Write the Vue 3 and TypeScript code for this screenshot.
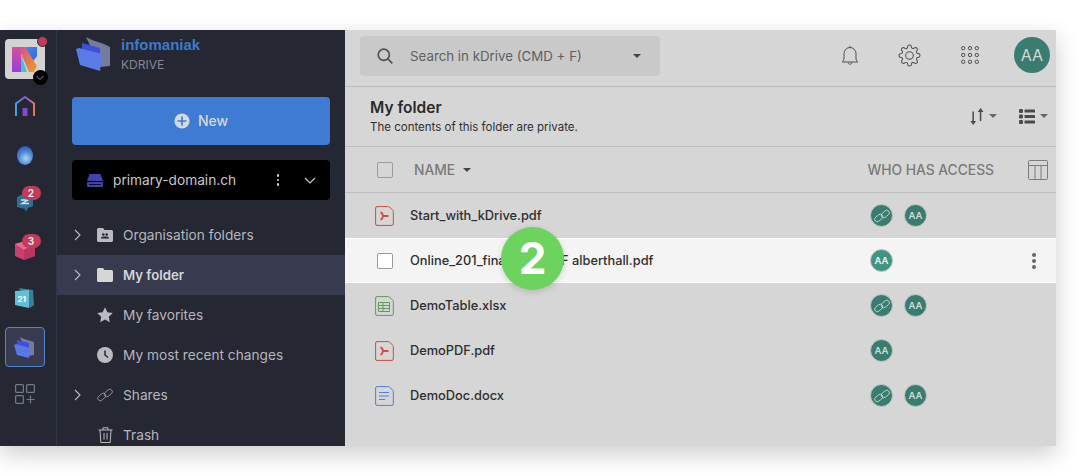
<script setup lang="ts">
type Access = 'link' | 'user'
interface FileRow { name: string; kind: 'pdf' | 'xlsx' | 'docx'; access: Access[]; active?: boolean }
const files: FileRow[] = [
  { name: 'Start_with_kDrive.pdf', kind: 'pdf', access: ['link', 'user'] },
  { name: 'Online_201_final_v2.1_PDF alberthall.pdf', kind: 'pdf', access: ['user'], active: true },
  { name: 'DemoTable.xlsx', kind: 'xlsx', access: ['link', 'user'] },
  { name: 'DemoPDF.pdf', kind: 'pdf', access: ['user'] },
  { name: 'DemoDoc.docx', kind: 'docx', access: ['link', 'user'] }
]
const nav = [
  { label: 'Organisation folders', icon: 'org', arrow: true },
  { label: 'My folder', icon: 'folder', arrow: true, selected: true },
  { label: 'My favorites', icon: 'star' },
  { label: 'My most recent changes', icon: 'clock' },
  { label: 'Shares', icon: 'link', arrow: true },
  { label: 'Trash', icon: 'trash' }
]
const filePath = 'M2 .6h11.500c.4 0 .7.1 1 .4l3.400 3.400c.3.3.4.6.4 1V18a1.400 1.400 0 0 1-1.400 1.400H2A1.400 1.400 0 0 1 .6 18V2A1.400 1.400 0 0 1 2 .6z'
</script>

<template>
  <div class="page">
    <div class="window">
      <aside class="rail">
        <div class="rail-logo">
          <div class="logo-box">
            <svg width="25" height="25" viewBox="0 0 25 25">
              <defs>
                <linearGradient id="kl" x1="0" y1="0" x2="0" y2="1"><stop offset="0" stop-color="#d84f9c"/><stop offset="1" stop-color="#9340d8"/></linearGradient>
                <linearGradient id="kd" x1="0" y1="0" x2="1" y2="1"><stop offset="0" stop-color="#d9489a"/><stop offset=".6" stop-color="#e57f45"/><stop offset="1" stop-color="#e8a03a"/></linearGradient>
                <linearGradient id="kr" x1="0" y1="0" x2="1" y2="1"><stop offset="0" stop-color="#3f8cf0"/><stop offset="1" stop-color="#3a5fe0"/></linearGradient>
              </defs>
              <path d="M0 0h9v25H0z" fill="url(#kl)"/>
              <path d="M9 8l6 17H9z" fill="#38c6dc"/>
              <path d="M13 0h12v9l-6 8z" fill="url(#kr)"/>
              <path d="M6 0h7l12 19-3 6h-5z" fill="url(#kd)"/>
            </svg>
          </div>
          <span class="logo-dot"></span>
          <span class="logo-chev">
            <svg width="10" height="6" viewBox="0 0 10 6"><path d="M1.500 1l3.500 3.500L8.500 1" fill="none" stroke="#8a8d96" stroke-width="1"/></svg>
          </span>
        </div>

        <div class="rail-item home">
          <svg width="20" height="20" viewBox="0 0 20 20">
            <defs><linearGradient id="hm" x1="0" y1="0" x2="1" y2="0"><stop offset="0" stop-color="#4a9ddc"/><stop offset=".5" stop-color="#8a55d0"/><stop offset="1" stop-color="#e0785a"/></linearGradient></defs>
            <path d="M1 20V7.500L10 1l9 6.500V20" fill="none" stroke="url(#hm)" stroke-width="2"/>
            <rect x="7.500" y="12" width="5" height="8" fill="#7f49cf"/>
          </svg>
        </div>
        <div class="rail-item drop">
          <span class="blob"></span>
        </div>
        <div class="rail-item chat">
          <svg width="16" height="19" viewBox="0 0 16 19">
            <path d="M0 4l8-4 8 3v10l-5 2-2 4-1-3-8-2z" fill="#2f6f93"/>
            <path d="M4 7h7L5 10.500h7" fill="none" stroke="#cfe6ee" stroke-width="1.400"/>
          </svg>
          <span class="count count-chat">2</span>
        </div>
        <div class="rail-item mail">
          <svg width="20" height="20" viewBox="0 0 20 20">
            <path d="M0 4l14-4 6 4v12l-11 4-9-4z" fill="#c9406f"/>
            <path d="M0 4l9 6 11-6-6-4z" fill="#e36a93"/>
            <path d="M9 10v10l11-4V4z" fill="#b8365f"/>
          </svg>
          <span class="count count-mail">3</span>
        </div>
        <div class="rail-item cal">
          <svg width="19" height="20" viewBox="0 0 19 20">
            <path d="M4 0l14 2 1 15-4 3z" fill="#3c7f93"/>
            <path d="M0 3l14-1v18L0 17z" fill="#63bfd6"/>
            <text x="2.500" y="14" class="cal-text">21</text>
          </svg>
        </div>
        <div class="rail-item drive">
          <svg width="21" height="21" viewBox="0 0 21 21">
            <path d="M6 0l4 2 10 3v13l-6 1z" fill="#747b9c"/>
            <path d="M3 3l12 3v13L3 14z" fill="#3d4fe0"/>
            <path d="M0 8l2-1 14 4-1 10-12-3z" fill="#5a77e8"/>
          </svg>
        </div>
        <div class="rail-item grid-add">
          <svg width="20" height="20" viewBox="0 0 20 20" fill="none" stroke="#73798a" stroke-width="1.200">
            <rect x=".6" y=".6" width="7.800" height="7.800" rx="1"/>
            <rect x="11.600" y=".6" width="7.800" height="7.800" rx="1"/>
            <rect x=".6" y="11.600" width="7.800" height="7.800" rx="1"/>
            <path d="M15.500 11.500v8M11.500 15.500h8"/>
          </svg>
        </div>
      </aside>

      <nav class="side">
        <div class="brand">
          <svg width="34" height="34" viewBox="0 0 34 34">
            <path d="M10 0l6 3 12 4 6 3v19l-10 1z" fill="#747b9c"/>
            <path d="M6 6l18 5v19L6 24z" fill="#3d4fe0"/>
            <path d="M0 12l3-1 23 6-2 17-20-6z" fill="#5a7be6"/>
          </svg>
          <div class="brand-text">
            <div class="brand-name">infomaniak</div>
            <div class="brand-sub">KDRIVE</div>
          </div>
        </div>

        <button class="new-btn">
          <svg width="16" height="16" viewBox="0 0 16 16"><circle cx="8" cy="8" r="7.600" fill="#d5d8de"/><path d="M8 3.500v9M3.500 8h9" stroke="#407bd3" stroke-width="1.700"/></svg>
          <span class="new-label">New</span>
        </button>

        <div class="drive-select">
          <svg width="16" height="13" viewBox="0 0 16 13">
            <path d="M2.500 0h11L16 7H0z" fill="#3f45a8"/>
            <rect y="8" width="16" height="5" rx="1" fill="#3f45a8"/>
            <rect x="2" y="10" width="12" height="1" fill="#111"/>
          </svg>
          <span class="drive-name">primary-domain.ch</span>
          <span class="vdots"><i></i><i></i><i></i></span>
          <svg class="drive-chev" width="12" height="7" viewBox="0 0 12 7"><path d="M1 1l5 5 5-5" fill="none" stroke="#c8c8c8" stroke-width="1.200"/></svg>
        </div>

        <ul class="nav">
          <li v-for="n in nav" :key="n.label" class="nav-row" :class="{ selected: n.selected }">
            <span class="nav-arrow">
              <svg v-if="n.arrow" width="7" height="12" viewBox="0 0 7 12"><path d="M1 1l5 5-5 5" fill="none" stroke="#b9bbc2" stroke-width="1.100"/></svg>
            </span>
            <span class="nav-icon">
              <svg v-if="n.icon === 'org'" width="16" height="14" viewBox="0 0 16 14">
                <path d="M0 1.500C0 .7.7 0 1.500 0H6l1.500 2h7c.8 0 1.500.7 1.500 1.500v9c0 .8-.7 1.500-1.500 1.500h-13C.7 14 0 13.300 0 12.500z" fill="#b9bbc0"/>
                <circle cx="6.300" cy="6.500" r="1.300" fill="#252733"/><circle cx="9.700" cy="6.500" r="1.300" fill="#252733"/>
                <path d="M4 10.500c0-1.300 1-2 2.300-2h3.400c1.300 0 2.300.7 2.300 2z" fill="#252733"/>
              </svg>
              <svg v-else-if="n.icon === 'folder'" width="16" height="14" viewBox="0 0 16 14">
                <path d="M0 1.500C0 .7.7 0 1.500 0H6l1.500 2h7c.8 0 1.500.7 1.500 1.500v9c0 .8-.7 1.500-1.500 1.500h-13C.7 14 0 13.300 0 12.500z" fill="#d6d6d6"/>
              </svg>
              <svg v-else-if="n.icon === 'star'" width="16" height="16" viewBox="0 0 16 16">
                <path d="M8 .3l2.400 5 5.400.7-4 3.800 1 5.400L8 12.600l-4.800 2.600 1-5.400-4-3.800 5.400-.7z" fill="#b9bbc0"/>
              </svg>
              <svg v-else-if="n.icon === 'clock'" width="16" height="16" viewBox="0 0 16 16">
                <circle cx="8" cy="8" r="8" fill="#b9bbc0"/><path d="M8 3.500V8l3 2.500" fill="none" stroke="#252733" stroke-width="1.500"/>
              </svg>
              <svg v-else-if="n.icon === 'link'" width="16" height="14" viewBox="0 0 16 14" fill="none" stroke="#9c9ea6" stroke-width=".8">
                <rect x=".2" y="6.500" width="9" height="5" rx="2.500" transform="rotate(-40 4.700 9)"/>
                <rect x="6.800" y="2.500" width="9" height="5" rx="2.500" transform="rotate(-40 11.300 5)"/>
              </svg>
              <svg v-else width="15" height="16" viewBox="0 0 15 16" fill="none" stroke="#b9bbc0" stroke-width="1">
                <path d="M.5 3h14M5 3V.8h5V3M2 3l.8 12.500h9.400L13 3M6 6v6.500M9 6v6.500"/>
              </svg>
            </span>
            <span class="nav-label">{{ n.label }}</span>
          </li>
        </ul>
      </nav>

      <main class="main">
        <header class="topbar">
          <div class="search">
            <svg width="16" height="16" viewBox="0 0 16 16" fill="none" stroke="#505050" stroke-width="1.700"><circle cx="6.800" cy="6.800" r="5.600"/><path d="M11 11l4.300 4.300"/></svg>
            <span class="search-text">Search in kDrive (CMD + F)</span>
            <span class="caret search-caret"></span>
          </div>
          <div class="top-icons">
            <svg class="ti-bell" width="18" height="21" viewBox="0 0 18 21" fill="none" stroke="#4f4f4f" stroke-width="1">
              <path d="M1.200 17h15.600c-1.200-1-1.800-2.400-1.800-4V8.500a6 6 0 0 0-12 0V13c0 1.600-.6 3-1.800 4zM9 2.500V.8M7 17.500c.4 2.300 3.600 2.300 4 0"/>
            </svg>
            <svg class="ti-gear" width="23" height="23" viewBox="0 0 24 24" fill="none" stroke="#4f4f4f" stroke-width="1.050">
              <circle cx="12" cy="12" r="4"/>
              <path d="M19.400 15a1.650 1.650 0 0 0 .33 1.820l.06.06a2 2 0 0 1 0 2.830 2 2 0 0 1-2.830 0l-.06-.06a1.650 1.650 0 0 0-1.820-.33 1.650 1.650 0 0 0-1 1.510V21a2 2 0 0 1-2 2 2 2 0 0 1-2-2v-.09A1.650 1.650 0 0 0 9 19.400a1.650 1.650 0 0 0-1.820.33l-.06.06a2 2 0 0 1-2.830 0 2 2 0 0 1 0-2.830l.06-.06a1.650 1.650 0 0 0 .33-1.820 1.650 1.650 0 0 0-1.510-1H3a2 2 0 0 1-2-2 2 2 0 0 1 2-2h.09A1.650 1.650 0 0 0 4.600 9a1.650 1.650 0 0 0-.33-1.820l-.06-.06a2 2 0 0 1 0-2.830 2 2 0 0 1 2.830 0l.06.06a1.650 1.650 0 0 0 1.820.33H9a1.650 1.650 0 0 0 1-1.510V3a2 2 0 0 1 2-2 2 2 0 0 1 2 2v.09a1.650 1.650 0 0 0 1 1.510 1.650 1.650 0 0 0 1.820-.33l.06-.06a2 2 0 0 1 2.830 0 2 2 0 0 1 0 2.830l-.06.06a1.650 1.650 0 0 0-.33 1.820V9a1.650 1.650 0 0 0 1.510 1H21a2 2 0 0 1 2 2 2 2 0 0 1-2 2h-.09a1.650 1.650 0 0 0-1.510 1z"/>
            </svg>
            <svg class="ti-grid" width="18" height="18" viewBox="0 0 18 18" fill="none" stroke="#4f4f4f" stroke-width="1">
              <template v-for="x in [2.200, 9, 15.800]" :key="x">
                <circle v-for="y in [2.200, 9, 15.800]" :key="y" :cx="x" :cy="y" r="1.700"/>
              </template>
            </svg>
            <span class="avatar-lg">AA</span>
          </div>
        </header>

        <section class="title-bar">
          <div>
            <h1>My folder</h1>
            <p>The contents of this folder are private.</p>
          </div>
          <div class="title-tools">
            <svg width="14" height="17" viewBox="0 0 14 17" fill="#4a4a4a"><path d="M2.400 3.500h1.500V13h2.200L3.200 17 .3 13h2.100zM9.800 4H7.700L10.600 0l2.900 4h-2.200v9H9.800z"/></svg>
            <span class="caret small"></span>
            <svg class="list-ico" width="16" height="15" viewBox="0 0 16 15" fill="#4a4a4a"><rect width="4" height="4" rx="1"/><rect y="5.500" width="4" height="4" rx="1"/><rect y="11" width="4" height="4" rx="1"/><rect x="5.500" y=".5" width="10.500" height="3" rx=".6"/><rect x="5.500" y="6" width="10.500" height="3" rx=".6"/><rect x="5.500" y="11.500" width="10.500" height="3" rx=".6"/></svg>
            <span class="caret small"></span>
          </div>
        </section>

        <div class="thead">
          <span class="check"></span>
          <span class="th-name">NAME</span>
          <span class="caret dark"></span>
          <span class="th-access">WHO HAS ACCESS</span>
          <svg class="th-cols" width="20" height="20" viewBox="0 0 20 20" fill="none" stroke="#7c7c7c" stroke-width="1"><rect x=".5" y=".5" width="19" height="19" rx="1"/><path d="M.5 5.500h19M7 5.500v14M13 5.500v14"/></svg>
        </div>

        <div v-for="f in files" :key="f.name" class="row" :class="{ active: f.active }">
          <span v-if="f.active" class="check row-check"></span>
          <span v-else class="file-ico">
            <svg width="19" height="20" viewBox="0 0 19 20" fill="none">
              <template v-if="f.kind === 'pdf'">
                <path :d="filePath" stroke="#c9503c"/>
                <path d="M5.500 6.500c1 0 2 1.200 2.500 3.500-.5 2.300-1.500 3.500-2.500 3.500M8 10h5.500" stroke="#c9503c" stroke-width="1.800"/>
              </template>
              <template v-else-if="f.kind === 'xlsx'">
                <path :d="filePath" stroke="#5a9e55"/>
                <path d="M3.500 6.500h11v9h-11zM3.500 9.500h11M3.500 12.500h11M8 6.500v9" stroke="#5a9e55"/>
              </template>
              <template v-else>
                <path :d="filePath" stroke="#4f83d1"/>
                <path d="M4 6.500h10M4 10h10M4 13.500h6" stroke="#4f83d1" stroke-width="1.200"/>
              </template>
            </svg>
          </span>
          <span class="file-name">{{ f.name }}</span>
          <span class="access">
            <span v-for="(a, i) in f.access" :key="i" class="chip">
              <svg v-if="a === 'link'" width="16" height="14" viewBox="0 0 16 14" fill="none" stroke="#d0dcd8" stroke-width=".8">
                <rect x=".2" y="6.500" width="9" height="5" rx="2.500" transform="rotate(-40 4.700 9)"/>
                <rect x="6.800" y="2.500" width="9" height="5" rx="2.500" transform="rotate(-40 11.300 5)"/>
              </svg>
              <template v-else>AA</template>
            </span>
          </span>
          <span v-if="f.active" class="row-dots"><i></i><i></i><i></i></span>
        </div>

        <span class="step">2</span>
      </main>
    </div>
  </div>
</template>

<style>
html, body { margin: 0; background: #fff; }
</style>

<style scoped>
.page {
  width: 1086px;
  height: 476px;
  padding-top: 30px;
  box-sizing: border-box;
  overflow: hidden;
  background: #fff;
  font-family: Inter, "Liberation Sans", sans-serif;
}
.window {
  width: 1056px;
  height: 416px;
  display: flex;
  overflow: hidden;
  box-shadow: 0 8px 22px rgba(0, 0, 0, 0.2);
}
.rail {
  width: 57px;
  flex: none;
  box-sizing: border-box;
  background: #252733;
  border-right: 1px solid #33364a;
  display: flex;
  flex-direction: column;
  align-items: center;
  padding-left: 5px;
  padding-right: 12px;
  padding-top: 9px;
}
.rail-logo {
  position: relative;
  width: 40px;
  height: 40px;
  flex: none;
  margin-bottom: 3px;
}
.logo-box {
  width: 40px;
  height: 40px;
  border-radius: 4px;
  background: #d3d3d3;
  display: flex;
  align-items: center;
  justify-content: center;
}
.logo-dot {
  position: absolute;
  top: -3px;
  right: -3px;
  width: 9px;
  height: 9px;
  border-radius: 50%;
  background: #c23a5c;
  border: 1px solid #252733;
}
.logo-chev {
  position: absolute;
  right: -3px;
  bottom: -6px;
  width: 15px;
  height: 15px;
  border-radius: 50%;
  background: #000;
  display: flex;
  align-items: center;
  justify-content: center;
}
.rail-item {
  position: relative;
  width: 40px;
  flex: none;
  display: flex;
  align-items: center;
  justify-content: center;
}
.rail-item.home { height: 48px; }
.rail-item.drop { height: 50px; }
.rail-item.chat { height: 44px; }
.rail-item.mail { height: 52px; }
.rail-item.cal { height: 44px; margin-bottom: 7px; }
.rail-item.drive {
  height: 40px;
  box-sizing: border-box;
  border: 1px solid #4d87cf;
  border-radius: 4px;
  background: #383b4f;
}
.rail-item.grid-add { height: 54px; }
.blob {
  width: 16px;
  height: 19px;
  border-radius: 50%;
  background: radial-gradient(circle at 55% 65%, #a9d8ee 0%, #4f86d6 45%, #1f3ea8 100%);
}
.count {
  position: absolute;
  height: 14px;
  min-width: 19px;
  border-radius: 7px;
  background: #c23a5c;
  color: #e8e8e8;
  font-size: 10px;
  font-weight: 700;
  line-height: 14px;
  text-align: center;
}
.count-chat { top: 6px; right: 4px; }
.count-mail { top: 10px; right: 4px; }
.cal-text { font-size: 8px; font-weight: 700; fill: #fff; font-family: Inter, sans-serif; }

.side {
  width: 288px;
  flex: none;
  background: #252733;
  display: flex;
  flex-direction: column;
  overflow: hidden;
}
.brand {
  height: 67px;
  flex: none;
  display: flex;
  align-items: flex-start;
  gap: 11px;
  padding: 7px 0 0 19px;
  box-sizing: border-box;
}
.brand-name {
  font-family: "Liberation Sans", sans-serif;
  font-size: 15px;
  font-weight: 700;
  color: #3f78cc;
  line-height: 16px;
}
.brand-sub {
  font-size: 12px;
  color: #858995;
  margin-top: 5px;
  line-height: 14px;
}
.new-btn {
  margin: 0 15px;
  width: 258px;
  height: 48px;
  flex: none;
  border: 0;
  border-radius: 4px;
  background: #407bd3;
  color: #d5d8de;
  font: 500 14px Inter, sans-serif;
  display: flex;
  align-items: center;
  justify-content: center;
  gap: 8px;
}
.new-label { margin-bottom: 1px; }
.drive-select {
  margin: 15px 15px 0;
  width: 258px;
  height: 40px;
  box-sizing: border-box;
  flex: none;
  background: #000;
  border-radius: 4px;
  display: flex;
  align-items: center;
  padding: 0 14px 0 15px;
  color: #c8c8c8;
  font-size: 13.700px;
}
.drive-name { margin-left: 10px; margin-bottom: 1px; flex: 1; }
.vdots { display: flex; flex-direction: column; gap: 2px; margin-right: 25px; }
.vdots i { display: block; width: 2.500px; height: 2.500px; border-radius: 50%; background: #d6d6d6; }
.nav { list-style: none; margin: 15px 0 0; padding: 0; }
.nav-row {
  height: 40px;
  display: flex;
  align-items: center;
  color: #b5b6bc;
  font-size: 13.700px;
  font-weight: 400;
}
.nav-row.selected { background: #383b4f; color: #d6d6d6; font-weight: 600; font-size: 13.200px; }
.nav-arrow { width: 17px; margin-left: 17px; display: flex; }
.nav-icon { width: 16px; margin-left: 6px; display: flex; justify-content: center; }
.nav-label { margin-left: 10px; margin-bottom: 1px; }

.main {
  position: relative;
  flex: 1;
  min-width: 0;
  background: #d6d6d6;
  color: #2a2a2a;
}
.topbar {
  height: 57px;
  box-sizing: border-box;
  border-bottom: 1px solid #bdbdbd;
  display: flex;
  align-items: center;
  justify-content: space-between;
  padding: 0 6px 4px 15px;
}
.search {
  width: 300px;
  height: 40px;
  box-sizing: border-box;
  background: #c9c9c9;
  border-radius: 4px;
  display: flex;
  align-items: center;
  padding: 0 17px;
  color: #5f5f5f;
  font-size: 13.300px;
}
.search-text { margin-left: 17px; flex: 1; }
.search-caret { border-top-color: #666; margin-right: 2px; }
.top-icons { display: flex; align-items: center; margin-bottom: 2px; }
.ti-bell { margin-right: 39px; }
.ti-gear { margin-right: 40px; }
.ti-grid { margin-right: 35px; }
.avatar-lg {
  width: 36px;
  height: 36px;
  border-radius: 50%;
  background: #3a7d70;
  color: #d6d6d6;
  font-size: 16px;
  display: flex;
  align-items: center;
  justify-content: center;
}
.caret {
  display: inline-block;
  width: 0;
  height: 0;
  border-left: 4px solid transparent;
  border-right: 4px solid transparent;
  border-top: 4px solid #444;
}
.caret.small { border-top-color: #666; margin-left: 5px; }
.caret.dark { margin-left: 8px; margin-top: 1px; }
.title-bar {
  height: 60px;
  box-sizing: border-box;
  border-bottom: 1px solid #bdbdbd;
  display: flex;
  align-items: center;
  justify-content: space-between;
  padding: 0 8px 1px 25px;
}
.title-bar h1 { margin: 0; font-size: 15.500px; line-height: 20px; font-weight: 600; color: #2a2a2a; }
.title-bar p { margin: 2px 0 0; font-size: 11.500px; line-height: 14px; color: #2f2f2f; }
.title-tools { display: flex; align-items: center; }
.list-ico { margin-left: 22px; }
.thead {
  height: 46px;
  box-sizing: border-box;
  border-bottom: 1px solid #bdbdbd;
  display: flex;
  align-items: center;
  padding: 0 8px 0 32px;
  color: #7a7a7a;
  font-size: 13.800px;
  font-weight: 500;
}
.check {
  width: 16px;
  height: 16px;
  box-sizing: border-box;
  border: 1px solid #9b9b9b;
  border-radius: 2px;
  flex: none;
}
.th-name { margin-left: 21px; }
.th-access { margin-left: auto; margin-right: 34px; }
.th-cols { flex: none; }
.row {
  height: 45px;
  box-sizing: border-box;
  display: flex;
  align-items: center;
  padding: 0 20px 0 30px;
  font-size: 12.800px;
  font-weight: 500;
  color: #2e2e2e;
}
.row.active {
  background: #f4f4f4;
  border-top: 1px solid #fff;
  border-bottom: 1px solid #fff;
}
.file-ico { width: 20px; height: 20px; flex: none; }
.row-check { margin-left: 2px; margin-right: 2px; background: #fff; }
.file-name { margin-left: 15px; margin-bottom: 1px; width: 460px; flex: none; white-space: nowrap; }
.row.active .file-name { margin-bottom: 0; }
.access { display: flex; gap: 11px; flex: 1; margin-left: 0; }
.chip {
  width: 23px;
  height: 23px;
  box-sizing: border-box;
  border: 1px solid #c2c8c6;
  border-radius: 50%;
  background: #3a7d70;
  color: #cfdcd8;
  font-size: 9.500px;
  font-weight: 600;
  display: flex;
  align-items: center;
  justify-content: center;
}
.row.active .chip { background: #3f9483; color: #f1f5f4; }
.row-dots { display: flex; flex-direction: column; gap: 2px; }
.row-dots i { display: block; width: 4px; height: 4px; border-radius: 50%; background: #666; }
.step {
  position: absolute;
  left: 156px;
  top: 197px;
  width: 63px;
  height: 63px;
  border-radius: 50%;
  background: #6dd35f;
  color: #fff;
  font-size: 44px;
  font-weight: 700;
  line-height: 63px;
  text-align: center;
  box-shadow: 0 2px 6px rgba(0, 0, 0, 0.15);
}
</style>
